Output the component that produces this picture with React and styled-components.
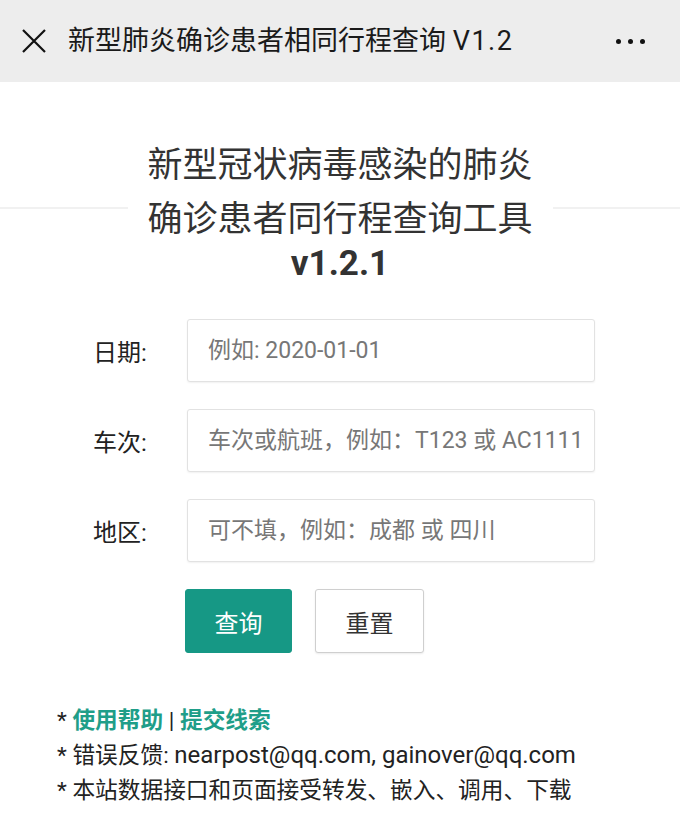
import React from "react";
import styled, { createGlobalStyle } from "styled-components";

const Global = createGlobalStyle`
  html, body { margin: 0; padding: 0; background: #fff; }
  body {
    font-family: Roboto, "Noto Sans CJK SC", "Noto Sans", sans-serif;
    color: #333;
  }
  * { box-sizing: border-box; }
`;

const Page = styled.div`
  width: 680px;
  min-height: 835px;
  background: #fff;
`;

const TopBar = styled.header`
  height: 82px;
  background: #ededed;
  display: flex;
  align-items: center;
  padding: 0 35px 0 22px;
`;

const BarTitle = styled.div`
  flex: 1;
  margin-left: 22px;
  font-size: 27px;
  color: #1a1a1a;
  white-space: nowrap;
  line-height: 1;
`;

const Latin = styled.span`
  letter-spacing: ${(p) => p.$spacing || "0"};
  font-size: ${(p) => p.$size || "inherit"};
`;

const Dots = styled.div`
  display: flex;
  gap: 7px;
`;

const Dot = styled.span`
  width: 5px;
  height: 5px;
  border-radius: 50%;
  background: #111;
`;

const HeadingArea = styled.section`
  padding-top: 57px;
  display: flex;
  justify-content: center;
  background: linear-gradient(
    to bottom,
    transparent 0,
    transparent 125px,
    #f1f1f1 125px,
    #f1f1f1 127px,
    transparent 127px
  );
`;

const HeadingBox = styled.div`
  width: 425px;
  background: #fff;
  text-align: center;
`;

const HeadLine = styled.div`
  font-size: 35px;
  line-height: 54px;
  color: #333;
  white-space: nowrap;
`;

const Version = styled.div`
  font-size: 35px;
  font-weight: 700;
  line-height: 34px;
  color: #333;
`;

const Form = styled.form`
  margin-top: 38px;
  padding-left: 93px;
  display: flex;
  flex-direction: column;
  gap: 27px;
`;

const Row = styled.div`
  display: flex;
  align-items: center;
`;

const Label = styled.label`
  width: 94px;
  font-size: 24px;
  color: #222;
`;

const Field = styled.input`
  width: 408px;
  height: 63px;
  border: 1px solid #e2e2e2;
  border-radius: 3px;
  box-shadow: 0 1px 2px rgba(0, 0, 0, 0.06);
  padding: 0 0 0 20px;
  font-family: inherit;
  font-size: 23px;
  color: #333;
  outline: none;
  &::placeholder {
    color: #777;
  }
`;

const Actions = styled.div`
  display: flex;
  gap: 23px;
  padding-left: 92px;
`;

const Button = styled.button`
  width: ${(p) => (p.$primary ? "107px" : "109px")};
  height: 64px;
  border-radius: 3px;
  font-family: inherit;
  font-size: 24px;
  cursor: pointer;
  border: 1px solid ${(p) => (p.$primary ? "#169885" : "#cfcfcf")};
  background: ${(p) => (p.$primary ? "#169885" : "#fff")};
  color: ${(p) => (p.$primary ? "#fff" : "#333")};
  box-shadow: ${(p) => (p.$primary ? "none" : "0 1px 2px rgba(0,0,0,0.08)")};
`;

const Notes = styled.div`
  margin-top: 50px;
  padding-left: 57px;
  font-size: 22.7px;
  line-height: 35px;
  color: #222;
`;

const Note = styled.div`
  white-space: nowrap;
`;

const Link = styled.a`
  color: #1f9e89;
  font-weight: 700;
  text-decoration: none;
`;

function CloseIcon() {
  return (
    <svg width="24" height="24" viewBox="0 0 24 24" fill="none">
      <path d="M1 1L23 23M23 1L1 23" stroke="#111" strokeWidth="2.2" strokeLinecap="butt" />
    </svg>
  );
}

export default function App() {
  return (
    <Page>
      <Global />
      <TopBar>
        <CloseIcon />
        <BarTitle>
          新型肺炎确诊患者相同行程查询 <Latin $spacing="1.5px">V1.2</Latin>
        </BarTitle>
        <Dots>
          <Dot />
          <Dot />
          <Dot />
        </Dots>
      </TopBar>

      <HeadingArea>
        <HeadingBox>
          <HeadLine>新型冠状病毒感染的肺炎</HeadLine>
          <HeadLine>确诊患者同行程查询工具</HeadLine>
          <Version>v1.2.1</Version>
        </HeadingBox>
      </HeadingArea>

      <Form onSubmit={(e) => e.preventDefault()}>
        <Row>
          <Label>日期:</Label>
          <Field placeholder="例如: 2020-01-01" />
        </Row>
        <Row>
          <Label>车次:</Label>
          <Field placeholder="车次或航班，例如：T123 或 AC1111" />
        </Row>
        <Row>
          <Label>地区:</Label>
          <Field placeholder="可不填，例如：成都 或 四川" />
        </Row>
        <Actions>
          <Button type="submit" $primary>查询</Button>
          <Button type="button">重置</Button>
        </Actions>
      </Form>

      <Notes>
        <Note>
          * <Link href="#">使用帮助</Link> | <Link href="#">提交线索</Link>
        </Note>
        <Note>
          * 错误反馈: <Latin $size="24px">nearpost@qq.com, gainover@qq.com</Latin>
        </Note>
        <Note>* 本站数据接口和页面接受转发、嵌入、调用、下载</Note>
      </Notes>
    </Page>
  );
}
